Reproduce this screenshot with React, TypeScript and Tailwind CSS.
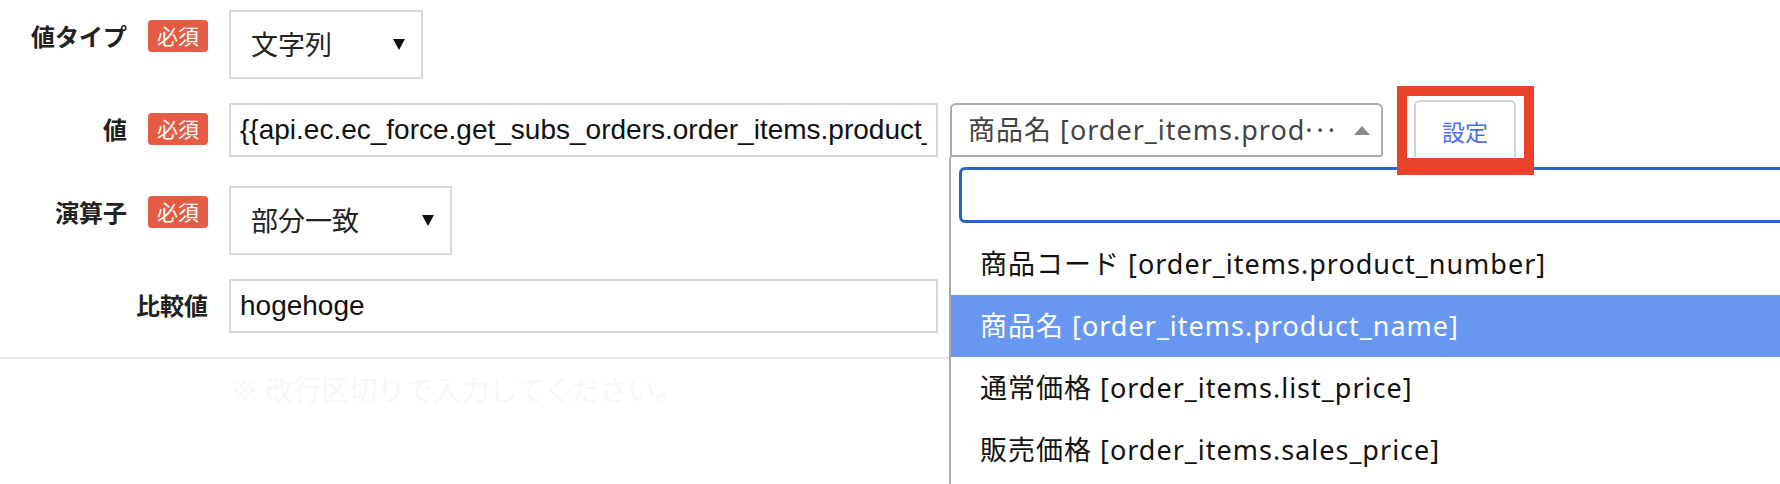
import * as React from "react";

const jp = "font-[family-name:Noto_Sans_CJK_JP,sans-serif]";
const mixed = "font-[family-name:Noto_Sans,Noto_Sans_CJK_JP,sans-serif]";
const helv = "font-[family-name:Liberation_Sans,Noto_Sans_CJK_JP,sans-serif]";

const options = [
  "商品コード [order_items.product_number]",
  "商品名 [order_items.product_name]",
  "通常価格 [order_items.list_price]",
  "販売価格 [order_items.sales_price]",
];

const LabelCell = ({ label, required }: { label: string; required?: boolean }) => (
  <div className="w-[208px] h-[52px] flex items-center justify-end gap-[21px] shrink-0">
    <span className={`${jp} text-[24px] font-bold text-[#222]`}>{label}</span>
    {required && (
      <span
        className={`${jp} w-[60px] h-[32px] rounded-[4px] bg-[#e55b44] text-white text-[21px] flex items-center justify-center`}
      >
        必須
      </span>
    )}
  </div>
);

const FakeSelect = ({ value, width }: { value: string; width: string }) => (
  <div
    className={`${width} h-[69px] border-2 border-[#d9d9d9] bg-white flex items-center justify-between pl-[20px] pr-[16px] shrink-0`}
  >
    <span className={`${jp} text-[27px] text-[#222]`}>{value}</span>
    <span className="w-0 h-0 border-l-[6px] border-r-[6px] border-t-[11px] border-l-transparent border-r-transparent border-t-[#111]" />
  </div>
);

const TextInput = ({ value }: { value: string }) => (
  <input
    readOnly
    value={value}
    className={`${helv} w-[709px] h-[54px] border-2 border-[#d9d9d9] px-[9px] text-[28px] text-[#111] outline-none bg-white shrink-0`}
  />
);

const App = () => {
  return (
    <div className="relative w-[1780px] h-[484px] overflow-hidden bg-white">
      <div className="flex flex-col gap-[24px] pt-[10px]">
        <div className="flex items-start gap-[21px]">
          <LabelCell label="値タイプ" required />
          <FakeSelect value="文字列" width="w-[194px]" />
        </div>

        <div className="flex items-start gap-[21px]">
          <LabelCell label="値" required />
          <div className="flex items-start">
            <TextInput value="{{api.ec.ec_force.get_subs_orders.order_items.product_name}}" />
            <div className="ml-[12px] w-[433px] h-[54px] border-2 border-[#aaa] rounded-t-[6px] rounded-br-[3px] flex items-center pl-[16px] pr-[11px] bg-white">
              <span className={`${mixed} flex-1 whitespace-nowrap text-[27px] tracking-[1px] text-[#444]`}>
                商品名 [order_items.prod<span className="tracking-[4px]">···</span>
              </span>
              <span className="ml-[12px] w-0 h-0 border-l-[8px] border-r-[8px] border-b-[9px] border-l-transparent border-r-transparent border-b-[#888]" />
            </div>
            <button
              className={`${jp} ml-[31px] -mt-[3px] w-[102px] h-[62px] border-2 border-[#cfd3d8] rounded-[6px] bg-white text-[23px] text-[#4f6cf5]`}
            >
              設定
            </button>
          </div>
        </div>

        <div className="flex items-start gap-[21px]">
          <LabelCell label="演算子" required />
          <FakeSelect value="部分一致" width="w-[223px]" />
        </div>

        <div className="flex items-start gap-[21px]">
          <LabelCell label="比較値" />
          <TextInput value="hogehoge" />
        </div>
      </div>

      <div className="mt-[24px] h-[2px] w-full bg-[#e4e8ec]" />
      <p className={`${jp} mt-[10px] pl-[231px] text-[28px] leading-[40px] text-[#f7f7f7]`}>
        ※ 改行区切りで入力してください。
      </p>

      {/* open select2 dropdown */}
      <div className="absolute left-[949px] top-[157px] w-[1000px] h-[340px] border-l-2 border-[#aaa] bg-white">
        <div className="pl-[8px] pt-[10px]">
          <div className="w-[980px] h-[56px] border-[3px] border-[#2a64c5] rounded-[6px]" />
        </div>
        <ul className="pt-[10px]">
          {options.map((o, i) => (
            <li
              key={o}
              className={`${mixed} h-[62px] flex items-center pl-[29px] text-[27px] tracking-[1px] ${
                i === 1 ? "bg-[#6897f2] text-white" : "text-[#111]"
              }`}
            >
              {o}
            </li>
          ))}
        </ul>
      </div>

      {/* annotation */}
      <div className="absolute left-[1397px] top-[86px] w-[137px] h-[89px] border-x-[10px] border-t-[10px] border-b-[17px] border-[#ea4129]" />
    </div>
  );
};

export default App;
